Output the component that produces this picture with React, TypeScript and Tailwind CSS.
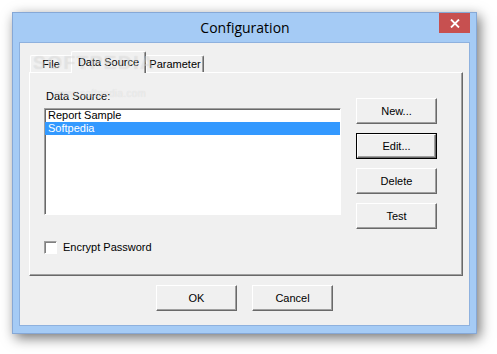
import React from "react";

const ui = { fontFamily: '"Liberation Sans", Arial, sans-serif' };

function Btn({ label, def = false }: { label: string; def?: boolean }) {
  if (def) {
    return (
      <div className="w-[81px] h-[26px] border border-black">
        <div className="w-full h-full bg-[#f0f0f0] border-t border-l border-white border-r border-b border-r-[#696969] border-b-[#696969] shadow-[inset_-1px_-1px_0_#a0a0a0] flex items-center justify-center text-[11px] text-black">
          {label}
        </div>
      </div>
    );
  }
  return (
    <div className="w-[81px] h-[26px] bg-[#f0f0f0] border-t border-l border-white border-r border-b border-r-[#696969] border-b-[#696969] shadow-[inset_-1px_-1px_0_#a0a0a0] flex items-center justify-center text-[11px] text-black">
      {label}
    </div>
  );
}

export default function App() {
  return (
    <div className="w-[497px] h-[354px] bg-white pt-[12px] pl-[12px] overflow-hidden" style={ui}>
      <div className="w-[465px] h-[322px] border border-[#86a8d6] bg-[#a5cbf5] flex flex-col shadow-[3px_4px_12px_rgba(0,0,0,0.55)]">
        {/* Title bar */}
        <div className="relative h-[29px] flex items-center justify-center">
          <span className="text-[14px] text-black pl-[1px]" style={{ fontFamily: '"Open Sans", "Noto Sans", sans-serif' }}>
            Configuration
          </span>
          <div className="absolute top-0 right-[6px] w-[31px] h-[20px] bg-[#c75050] flex items-center justify-center">
            <svg width="10" height="9" viewBox="0 0 10 9">
              <path d="M1 0.5 L9 8.5 M9 0.5 L1 8.5" stroke="white" strokeWidth="1.8" />
            </svg>
          </div>
        </div>
        {/* Client */}
        <div className="relative mx-[6px] h-[284px] border border-[#8eb1de] bg-[#f0f0f0] flex flex-col">
          <div className="pl-[9px] pt-[8px]">
            {/* Tabs */}
            <div className="h-[21px] flex items-end pl-[1px] text-[11px] text-black">
              <div className="w-[41px] h-[17px] border-t border-l border-white rounded-tl-[2px] flex items-center justify-center pt-[1px]">
                File
              </div>
              <div className="relative z-10 w-[75px] h-[22px] mb-[-1px] bg-[#f0f0f0] border-t border-l border-white border-r border-r-[#696969] shadow-[inset_-1px_0_0_#a0a0a0] rounded-t-[2px] flex items-start justify-center pt-[2px]">
                Data Source
              </div>
              <div className="w-[58px] h-[17px] border-t border-l border-white border-r border-r-[#696969] shadow-[inset_-1px_0_0_#a0a0a0] rounded-tr-[2px] flex items-center justify-center pt-[1px]">
                Parameter
              </div>
            </div>
            {/* Panel */}
            <div className="w-[434px] h-[204px] border-t border-l border-white border-r border-b border-r-[#696969] border-b-[#696969] shadow-[inset_-1px_-1px_0_#a0a0a0] pl-[14px] pt-[17px] flex items-start text-[11px] text-black">
              <div className="w-[297px] flex flex-col">
                <div className="h-[13px] leading-[13px] pl-[2px]">Data Source:</div>
                <div className="mt-[5px] h-[107px] bg-white border-t border-l border-[#a0a0a0] border-r border-b border-r-white border-b-white shadow-[inset_1px_1px_0_#696969]">
                  <div className="h-[13px] leading-[13px] pl-[3px] text-black">Report Sample</div>
                  <div className="h-[13px] leading-[13px] pl-[3px] bg-[#3399ff] text-white">Softpedia</div>
                </div>
                <div className="mt-[26px] flex items-center">
                  <div className="w-[13px] h-[13px] bg-white border-t border-l border-[#a0a0a0] border-r border-b border-r-white border-b-white shadow-[inset_1px_1px_0_#808080]" />
                  <span className="ml-[6px] leading-[13px]">Encrypt Password</span>
                </div>
              </div>
              <div className="ml-[15px] mt-[8px] flex flex-col gap-[9px]">
                <Btn label="New..." />
                <Btn label="Edit..." def />
                <Btn label="Delete" />
                <Btn label="Test" />
              </div>
            </div>
          </div>
          {/* Bottom buttons */}
          <div className="mt-[9px] flex justify-center gap-[15px]">
            <Btn label="OK" />
            <Btn label="Cancel" />
          </div>
          {/* Watermark */}
          <div className="pointer-events-none absolute z-20 left-[13px] top-[9px] text-[19px] leading-[22px] font-bold tracking-[1.5px] text-white/35 [text-shadow:0_0_1px_rgba(0,0,0,0.12)]">
            SOFTPEDIA
          </div>
          <div className="pointer-events-none absolute z-20 left-[35px] top-[43px] text-[10px] tracking-[0.3px] text-white/45 [text-shadow:0_0_1px_rgba(0,0,0,0.12)]">
            www.softpedia.com
          </div>
        </div>
      </div>
    </div>
  );
}
